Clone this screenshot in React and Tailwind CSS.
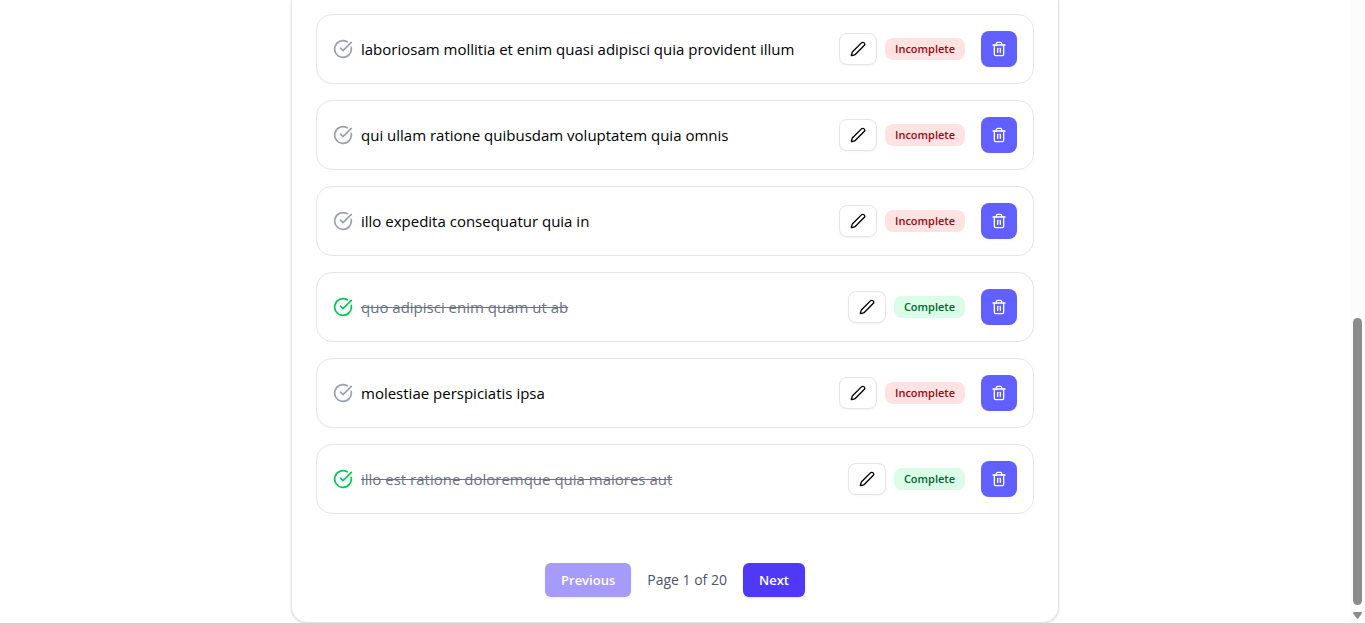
import { useState } from "react";
import { CircleCheckBig, Trash2 } from "lucide-react";

const TODOS = [
  { id: 5, title: "laboriosam mollitia et enim quasi adipisci quia provident illum", completed: false },
  { id: 6, title: "qui ullam ratione quibusdam voluptatem quia omnis", completed: false },
  { id: 7, title: "illo expedita consequatur quia in", completed: false },
  { id: 8, title: "quo adipisci enim quam ut ab", completed: true },
  { id: 9, title: "molestiae perspiciatis ipsa", completed: false },
  { id: 10, title: "illo est ratione doloremque quia maiores aut", completed: true },
];

function PencilIcon() {
  return (
    <svg viewBox="0 0 24 24" className="size-4" fill="none" stroke="currentColor" strokeWidth="2" strokeLinecap="round" strokeLinejoin="round" aria-hidden="true">
      <path d="M21.174 6.812a1 1 0 0 0-3.986-3.987L3.842 16.174a2 2 0 0 0-.5.83l-1.321 4.352a.5.5 0 0 0 .623.622l4.353-1.32a2 2 0 0 0 .83-.497z" />
    </svg>
  );
}

function TodoItem({ todo }) {
  const { title, completed } = todo;
  return (
    <li className="flex items-center justify-between gap-4 rounded-2xl border border-neutral-200 bg-white p-4">
      <div className="flex min-w-0 items-center gap-2">
        <CircleCheckBig className={completed ? "size-5 shrink-0 text-green-500" : "size-5 shrink-0 text-gray-400"} />
        <a href="#todo" className={completed ? "text-[15px] leading-6 text-gray-500 line-through" : "text-[15px] leading-6 text-black"}>
          {title}
        </a>
      </div>
      <div className="flex shrink-0 items-center gap-4">
        <div className="flex items-center gap-2">
          <button type="button" aria-label="Edit" className="flex h-8 items-center rounded-lg border border-neutral-200 bg-white px-[10px] text-black shadow-xs">
            <PencilIcon />
          </button>
          <span className={completed ? "rounded-lg bg-green-100 px-[10px] py-[3px] text-[11px] leading-4 font-semibold text-green-800" : "rounded-lg bg-red-100 px-[10px] py-[3px] text-[11px] leading-4 font-semibold text-red-800"}>
            {completed ? "Complete" : "Incomplete"}
          </span>
        </div>
        <button type="button" aria-label="Delete" className="flex size-9 items-center justify-center rounded-lg bg-[#615fff] text-white">
          <Trash2 className="size-4" />
        </button>
      </div>
    </li>
  );
}

export default function App() {
  const [page, setPage] = useState(1);
  return (
    <div className="flex min-h-screen flex-col bg-white font-['Open_Sans','Noto_Sans',sans-serif]">
      <div className="flex grow">
        <main className="flex grow items-start justify-center">
          <section className="w-full max-w-3xl rounded-b-2xl border border-t-0 border-neutral-200 bg-white px-6 pt-[14px] pb-[25px] shadow-sm">
            <ul className="flex flex-col gap-4">
              {TODOS.map((todo) => (
                <TodoItem key={todo.id} todo={todo} />
              ))}
            </ul>
            <nav aria-label="Pagination" className="mt-[49px] flex items-center justify-center gap-4">
              <button
                type="button"
                disabled={page === 1}
                onClick={() => setPage(page - 1)}
                className="rounded-md bg-[#4f39f6] px-4 py-2 text-[13px] leading-[18px] font-semibold text-white shadow-sm disabled:opacity-50"
              >
                Previous
              </button>
              <span className="text-sm text-gray-600">Page {page} of 20</span>
              <button
                type="button"
                disabled={page === 20}
                onClick={() => setPage(page + 1)}
                className="rounded-md bg-[#4f39f6] px-4 py-2 text-[13px] leading-[18px] font-semibold text-white shadow-sm disabled:opacity-50"
              >
                Next
              </button>
            </nav>
          </section>
        </main>
        <div aria-hidden="true" className="flex w-[15px] shrink-0 flex-col items-center justify-end gap-[7px] bg-[#fcfcfc] pb-1">
          <div className="h-[287px] w-[9px] rounded-full bg-[#8b8b8b]" />
          <svg viewBox="0 0 9 7" className="h-[7px] w-[9px]" fill="#8b8b8b">
            <path d="M0.8 0h7.4q1.2.2.6 1.2L5.6 6q-1.1 1.4-2.2 0L.2 1.2Q-.2.2.8 0z" />
          </svg>
        </div>
      </div>
      <div className="h-[2px] bg-[#d2d2d2]" />
    </div>
  );
}
